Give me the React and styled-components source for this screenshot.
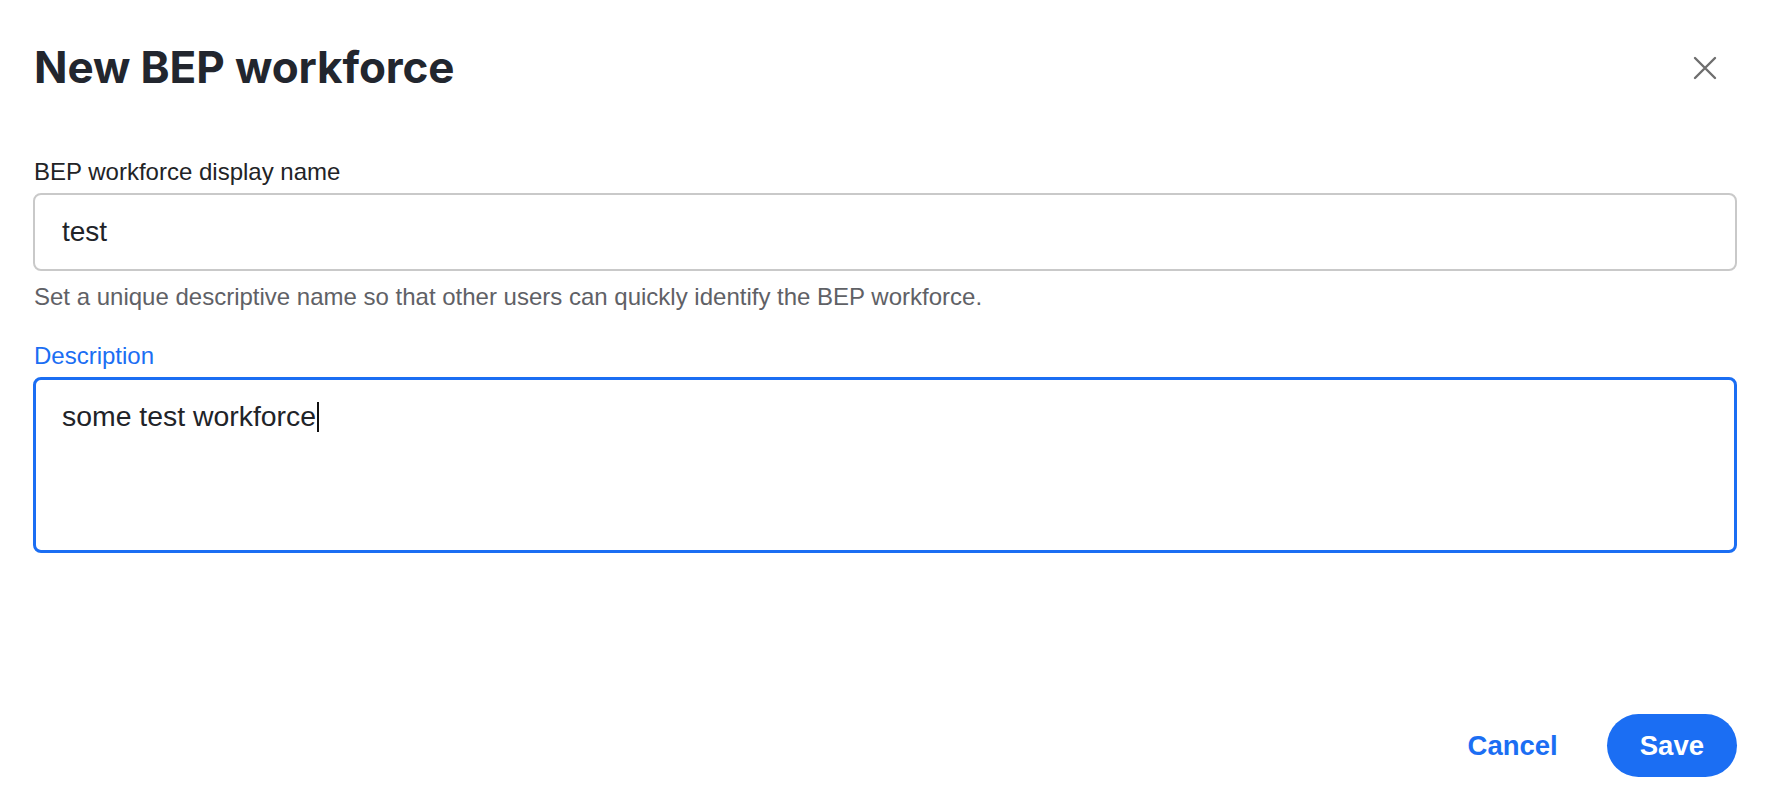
import React from 'react'
import styled, { createGlobalStyle } from 'styled-components'

const GlobalStyle = createGlobalStyle`
  html, body {
    margin: 0;
    padding: 0;
    background: #ffffff;
  }
  body {
    font-family: "Liberation Sans", Arial, sans-serif;
    -webkit-font-smoothing: antialiased;
  }
`

const Dialog = styled.div`
  display: flex;
  flex-direction: column;
  width: 1782px;
  height: 800px;
  box-sizing: border-box;
  padding: 40px 45px 0 33px;
  background: #fff;
`

const Header = styled.div`
  display: flex;
  align-items: center;
  justify-content: space-between;
`

const Title = styled.h1`
  margin: 0;
  padding-left: 1px;
  font-family: Inter, "Noto Sans", sans-serif;
  font-weight: 700;
  font-size: 44px;
  line-height: 55px;
  letter-spacing: -0.1px;
  color: #22262e;
`

const CloseButton = styled.button`
  display: flex;
  align-items: center;
  justify-content: center;
  padding: 8px;
  margin-right: 12px;
  border: none;
  background: transparent;
  cursor: pointer;
`

const Field = styled.div`
  display: flex;
  flex-direction: column;
  margin-top: ${p => p.$top}px;
`

const Label = styled.label`
  font-size: 24px;
  line-height: 29px;
  padding-left: 1px;
  margin-bottom: 7px;
  color: ${p => (p.$active ? '#1b6ef3' : '#222326')};
`

const Input = styled.div`
  display: flex;
  align-items: center;
  box-sizing: border-box;
  height: 78px;
  padding: 0 27px;
  border: 2px solid #c9c9c9;
  border-radius: 8px;
  font-size: 28px;
  line-height: 34px;
  color: #212328;
`

const Hint = styled.div`
  margin-top: 11px;
  padding-left: 1px;
  font-size: 24px;
  line-height: 29px;
  color: #5f6166;
`

const TextArea = styled.div`
  box-sizing: border-box;
  height: 176px;
  padding: 19px 26px;
  border: 3px solid #1b6ef3;
  border-radius: 8px;
  font-size: 28.4px;
  line-height: 34px;
  color: #212328;
`

const Caret = styled.span`
  display: inline-block;
  width: 2px;
  height: 30px;
  margin-left: 1px;
  vertical-align: -6px;
  background: #111;
`

const Footer = styled.div`
  display: flex;
  align-items: center;
  justify-content: flex-end;
  gap: 33px;
  margin-top: 161px;
`

const Button = styled.button`
  height: 63px;
  padding: 0 ${p => (p.$primary ? 33 : 16)}px;
  border: none;
  border-radius: 32px;
  font-family: "Liberation Sans", Arial, sans-serif;
  font-weight: 700;
  font-size: 27.5px;
  color: ${p => (p.$primary ? '#fff' : '#1b6ef3')};
  background: ${p => (p.$primary ? '#1b6ef3' : 'transparent')};
  cursor: pointer;
`

const CloseIcon = () => (
  <svg width="24" height="24" viewBox="0 0 24 24">
    <path d="M2 2 L22 22 M22 2 L2 22" stroke="#6e6e6e" strokeWidth="2.4" strokeLinecap="round" />
  </svg>
)

const App = () => (
  <>
    <GlobalStyle />
    <Dialog>
      <Header>
        <Title>New BEP workforce</Title>
        <CloseButton aria-label="Close">
          <CloseIcon />
        </CloseButton>
      </Header>

      <Field $top={62}>
        <Label>BEP workforce display name</Label>
        <Input>test</Input>
        <Hint>Set a unique descriptive name so that other users can quickly identify the BEP workforce.</Hint>
      </Field>

      <Field $top={30}>
        <Label $active>Description</Label>
        <TextArea>
          some test workforce<Caret />
        </TextArea>
      </Field>

      <Footer>
        <Button>Cancel</Button>
        <Button $primary>Save</Button>
      </Footer>
    </Dialog>
  </>
)

export default App
